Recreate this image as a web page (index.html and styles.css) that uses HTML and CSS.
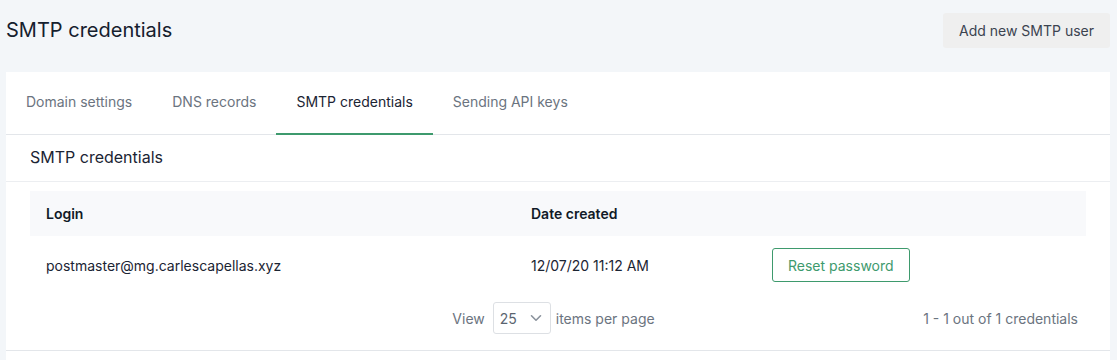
FILE: index.html
```html
<!DOCTYPE html>
<html>
<head>
<meta charset="utf-8">
<link rel="stylesheet" href="styles.css">
</head>
<body>
<div class="page">
  <header class="page-header">
    <h1 class="page-title">SMTP credentials</h1>
    <button class="btn-secondary">Add new SMTP user</button>
  </header>
  <section class="card">
    <nav class="tabs">
      <a class="tab">Domain settings</a>
      <a class="tab">DNS records</a>
      <a class="tab active">SMTP credentials</a>
      <a class="tab">Sending API keys</a>
    </nav>
    <h2 class="section-title">SMTP credentials</h2>
    <div class="table-wrap">
      <div class="row head">
        <div class="cell">Login</div>
        <div class="cell">Date created</div>
        <div class="cell"></div>
      </div>
      <div class="row body">
        <div class="cell">postmaster@mg.carlescapellas.xyz</div>
        <div class="cell">12/07/20 11:12 AM</div>
        <div class="cell"><button class="btn-outline">Reset password</button></div>
      </div>
      <div class="pager">
        <div></div>
        <div class="per-page">
          <span>View</span>
          <div class="select">
            <span>25</span>
            <svg width="12" height="8" viewBox="0 0 12 8"><path d="M1.5 1.8 L6 6.2 L10.5 1.8" fill="none" stroke="#8a929c" stroke-width="1.6" stroke-linecap="round" stroke-linejoin="round"/></svg>
          </div>
          <span>items per page</span>
        </div>
        <div class="count">1 - 1 out of 1 credentials</div>
      </div>
    </div>
    <div class="card-foot"></div>
  </section>
</div>
</body>
</html>
```
FILE: styles.css
```css
* { box-sizing: border-box; }
html, body {
  margin: 0;
  padding: 0;
  background: #f3f6f9;
  font-family: Inter, "Noto Sans", sans-serif;
  color: #1b2433;
}
.page {
  padding: 0 7px 0 6px;
}
.page-header {
  display: flex;
  justify-content: space-between;
  align-items: center;
  height: 72px;
  padding-bottom: 12px;
}
.page-title {
  margin: 0;
  font-size: 20px;
  font-weight: 400;
  color: #15202e;
}
.btn-secondary {
  font-family: inherit;
  font-size: 14px;
  color: #3b4350;
  background: #efefef;
  border: none;
  border-radius: 3px;
  height: 35px;
  padding: 0 16px;
}
.card {
  background: #fff;
  height: 300px;
}
.tabs {
  display: flex;
  height: 63px;
  border-bottom: 1px solid #e3e6ea;
}
.tab {
  display: flex;
  align-items: center;
  padding: 0 20px 2px;
  font-size: 14px;
  color: #6b7480;
  border-bottom: 2px solid transparent;
  margin-bottom: -1px;
}
.tab.active {
  color: #1b2433;
  border-bottom-color: #3e9a6d;
}
.section-title {
  margin: 0;
  height: 47px;
  display: flex;
  align-items: center;
  padding: 0 24px 2px;
  font-size: 16px;
  font-weight: 400;
  color: #1b2433;
  border-bottom: 1px solid #eceef1;
}
.table-wrap {
  margin: 9px 24px 0;
}
.row {
  display: grid;
  grid-template-columns: 485px 241px 1fr;
  align-items: center;
}
.row.head {
  background: #f8f9fb;
  height: 45px;
  font-weight: 600;
  font-size: 14px;
  color: #111a27;
}
.row.body {
  height: 60px;
  padding-bottom: 2px;
  font-size: 14px;
  color: #1b2433;
}
.cell {
  padding: 0 16px;
}
.btn-outline {
  font-family: inherit;
  font-size: 14px;
  color: #3e9a6d;
  background: #fff;
  border: 1px solid #3e9a6d;
  border-radius: 3px;
  height: 34px;
  padding: 0 15px;
}
.pager {
  display: grid;
  grid-template-columns: 1fr auto 1fr;
  align-items: center;
  height: 44px;
  font-size: 14px;
  color: #6b7480;
}
.per-page {
  display: flex;
  align-items: center;
  gap: 6px;
  margin-left: -9px;
}
.per-page span:first-child { margin-right: 2px; }
.select {
  display: flex;
  align-items: center;
  justify-content: space-between;
  width: 58px;
  height: 32px;
  padding: 0 8px 0 6px;
  border: 1px solid #dde0e4;
  border-radius: 3px;
  color: #5b6470;
  margin-right: -1px;
}
.count {
  text-align: right;
  padding-right: 8px;
}
.card-foot {
  margin-top: 10px;
  border-top: 1px solid #e3e6ea;
}
```
